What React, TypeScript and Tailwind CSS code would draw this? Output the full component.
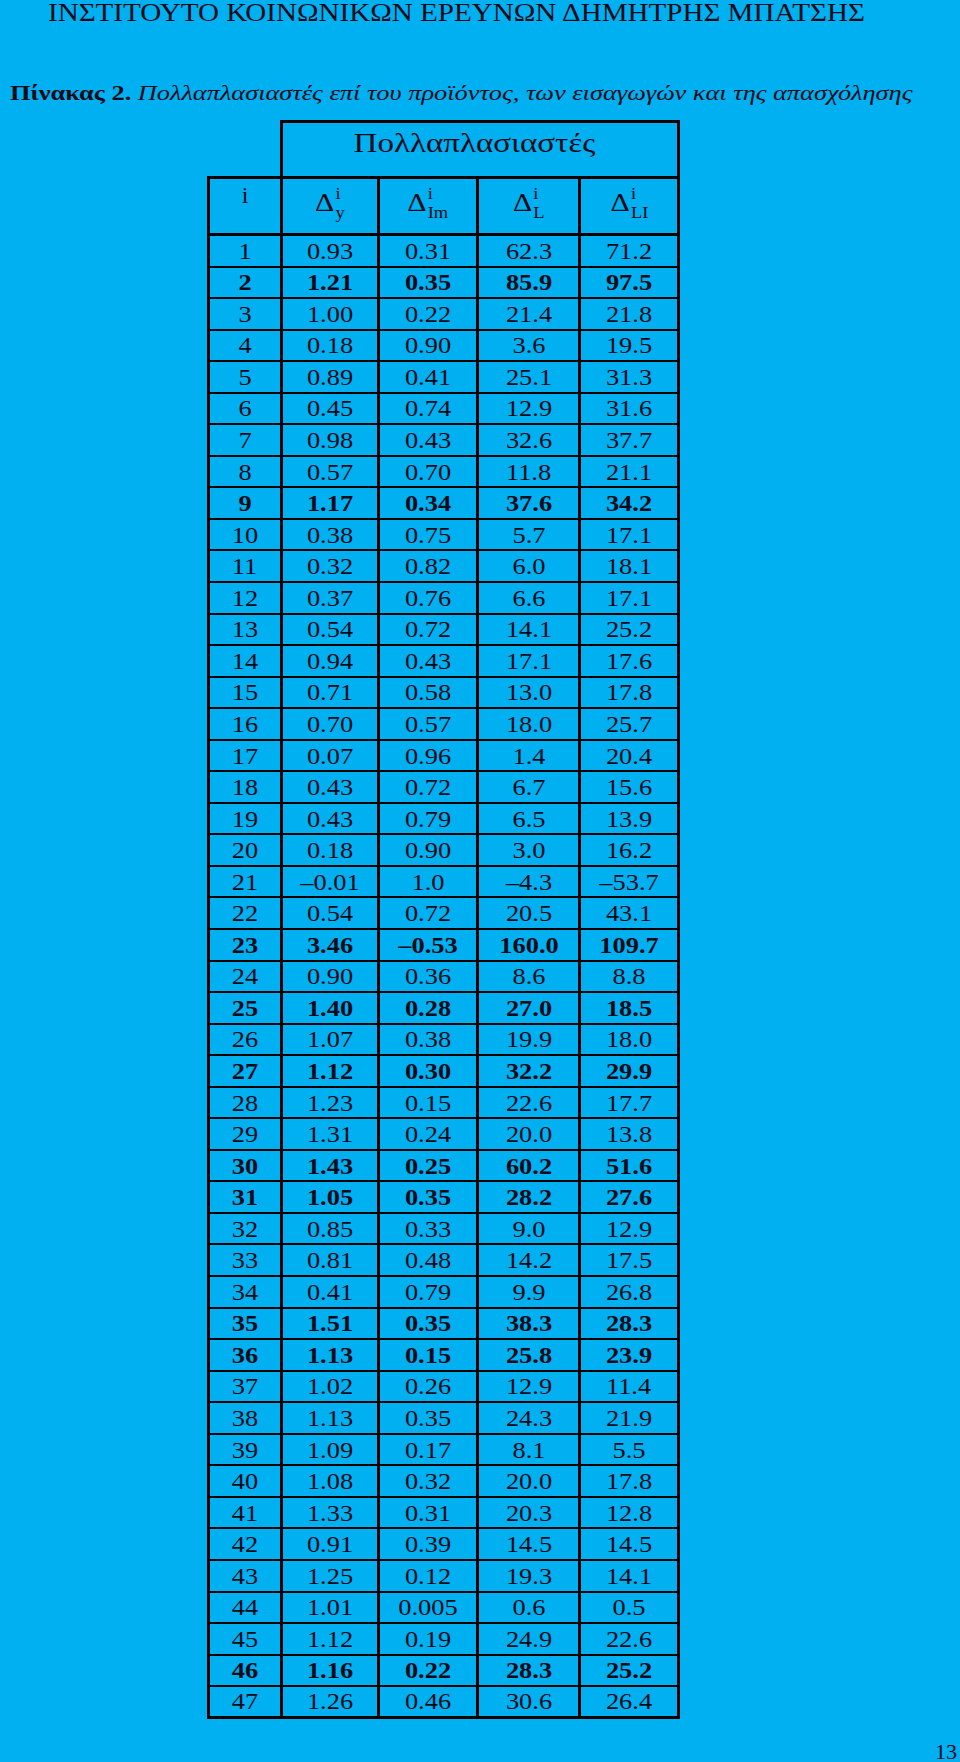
const rows: [string, string, string, string, string, boolean][] = [
  ["1", "0.93", "0.31", "62.3", "71.2", false],
  ["2", "1.21", "0.35", "85.9", "97.5", true],
  ["3", "1.00", "0.22", "21.4", "21.8", false],
  ["4", "0.18", "0.90", "3.6", "19.5", false],
  ["5", "0.89", "0.41", "25.1", "31.3", false],
  ["6", "0.45", "0.74", "12.9", "31.6", false],
  ["7", "0.98", "0.43", "32.6", "37.7", false],
  ["8", "0.57", "0.70", "11.8", "21.1", false],
  ["9", "1.17", "0.34", "37.6", "34.2", true],
  ["10", "0.38", "0.75", "5.7", "17.1", false],
  ["11", "0.32", "0.82", "6.0", "18.1", false],
  ["12", "0.37", "0.76", "6.6", "17.1", false],
  ["13", "0.54", "0.72", "14.1", "25.2", false],
  ["14", "0.94", "0.43", "17.1", "17.6", false],
  ["15", "0.71", "0.58", "13.0", "17.8", false],
  ["16", "0.70", "0.57", "18.0", "25.7", false],
  ["17", "0.07", "0.96", "1.4", "20.4", false],
  ["18", "0.43", "0.72", "6.7", "15.6", false],
  ["19", "0.43", "0.79", "6.5", "13.9", false],
  ["20", "0.18", "0.90", "3.0", "16.2", false],
  ["21", "–0.01", "1.0", "–4.3", "–53.7", false],
  ["22", "0.54", "0.72", "20.5", "43.1", false],
  ["23", "3.46", "–0.53", "160.0", "109.7", true],
  ["24", "0.90", "0.36", "8.6", "8.8", false],
  ["25", "1.40", "0.28", "27.0", "18.5", true],
  ["26", "1.07", "0.38", "19.9", "18.0", false],
  ["27", "1.12", "0.30", "32.2", "29.9", true],
  ["28", "1.23", "0.15", "22.6", "17.7", false],
  ["29", "1.31", "0.24", "20.0", "13.8", false],
  ["30", "1.43", "0.25", "60.2", "51.6", true],
  ["31", "1.05", "0.35", "28.2", "27.6", true],
  ["32", "0.85", "0.33", "9.0", "12.9", false],
  ["33", "0.81", "0.48", "14.2", "17.5", false],
  ["34", "0.41", "0.79", "9.9", "26.8", false],
  ["35", "1.51", "0.35", "38.3", "28.3", true],
  ["36", "1.13", "0.15", "25.8", "23.9", true],
  ["37", "1.02", "0.26", "12.9", "11.4", false],
  ["38", "1.13", "0.35", "24.3", "21.9", false],
  ["39", "1.09", "0.17", "8.1", "5.5", false],
  ["40", "1.08", "0.32", "20.0", "17.8", false],
  ["41", "1.33", "0.31", "20.3", "12.8", false],
  ["42", "0.91", "0.39", "14.5", "14.5", false],
  ["43", "1.25", "0.12", "19.3", "14.1", false],
  ["44", "1.01", "0.005", "0.6", "0.5", false],
  ["45", "1.12", "0.19", "24.9", "22.6", false],
  ["46", "1.16", "0.22", "28.3", "25.2", true],
  ["47", "1.26", "0.46", "30.6", "26.4", false],
];

const widths = ["w-[73px]", "w-[97px]", "w-[99px]", "w-[102px]", "w-[102px] border-r-[3px]"];

function Delta({ sub }: { sub: string }) {
  return (
    <div className="flex scale-x-[1.15] items-start">
      <span className="mt-[6px] text-[26px] leading-none">Δ</span>
      <span className="ml-[1px] flex flex-col text-[16px] leading-[19px]">
        <span>i</span>
        <span>{sub}</span>
      </span>
    </div>
  );
}

export default function App() {
  return (
    <div className="h-[1762px] w-[960px] overflow-hidden bg-[#00b0f0] font-['Liberation_Serif',serif] text-[#0a0a18]">
      <p className="pl-[48px] text-[26px] leading-none">
        <span className="inline-block origin-left scale-x-[1.118] whitespace-nowrap">
          ΙΝΣΤΙΤΟΥΤΟ ΚΟΙΝΩΝΙΚΩΝ ΕΡΕΥΝΩΝ ΔΗΜΗΤΡΗΣ ΜΠΑΤΣΗΣ
        </span>
      </p>
      <p className="mt-[55.6px] pl-[10px] text-[22px] leading-none">
        <span className="inline-block origin-left scale-x-[1.198] whitespace-nowrap">
          <span className="font-bold">Πίνακας 2.</span>{" "}
          <span className="italic">
            Πολλαπλασιαστές επί του προϊόντος, των εισαγωγών και της απασχόλησης
          </span>
        </span>
      </p>

      <div className="ml-[207px] mt-[16.4px] w-[473px]">
        <div className="flex h-[56px]">
          <div className="w-[73px]" />
          <div className="flex w-[400px] justify-center border-x-[3px] border-t-[3px] border-black pr-[12px] pt-[6.5px] text-[28px] leading-none">
            <span className="inline-block scale-x-[1.18]">Πολλαπλασιαστές</span>
          </div>
        </div>

        <div className="flex h-[60px] border-y-[3px] border-black">
          <div className="flex w-[73px] justify-center border-l-[3px] border-black pt-[4px] text-[24px] leading-none">
            i
          </div>
          <div className="flex w-[97px] justify-center border-l-[3px] border-black pt-[5px]">
            <Delta sub="y" />
          </div>
          <div className="flex w-[99px] justify-center border-l-[3px] border-black pt-[5px]">
            <Delta sub="Im" />
          </div>
          <div className="flex w-[102px] justify-center border-l-[3px] border-black pt-[5px]">
            <Delta sub="L" />
          </div>
          <div className="flex w-[102px] justify-center border-x-[3px] border-black pt-[5px]">
            <Delta sub="LI" />
          </div>
        </div>

        {rows.map((r, i) => (
          <div
            key={r[0]}
            className={`flex h-[31.55px] border-black ${i === rows.length - 1 ? "border-b-[3px]" : "border-b-2"} ${r[5] ? "font-bold" : ""}`}
          >
            {r.slice(0, 5).map((v, j) => (
              <div
                key={j}
                className={`flex items-center justify-center border-l-[3px] border-black text-[24px] leading-none ${widths[j]}`}
              >
                <span className="inline-block scale-x-[1.1] whitespace-nowrap">{v}</span>
              </div>
            ))}
          </div>
        ))}
      </div>

      <div className="mt-[22.6px] flex justify-end pr-[3px] text-[22px] leading-none">13</div>
    </div>
  );
}
